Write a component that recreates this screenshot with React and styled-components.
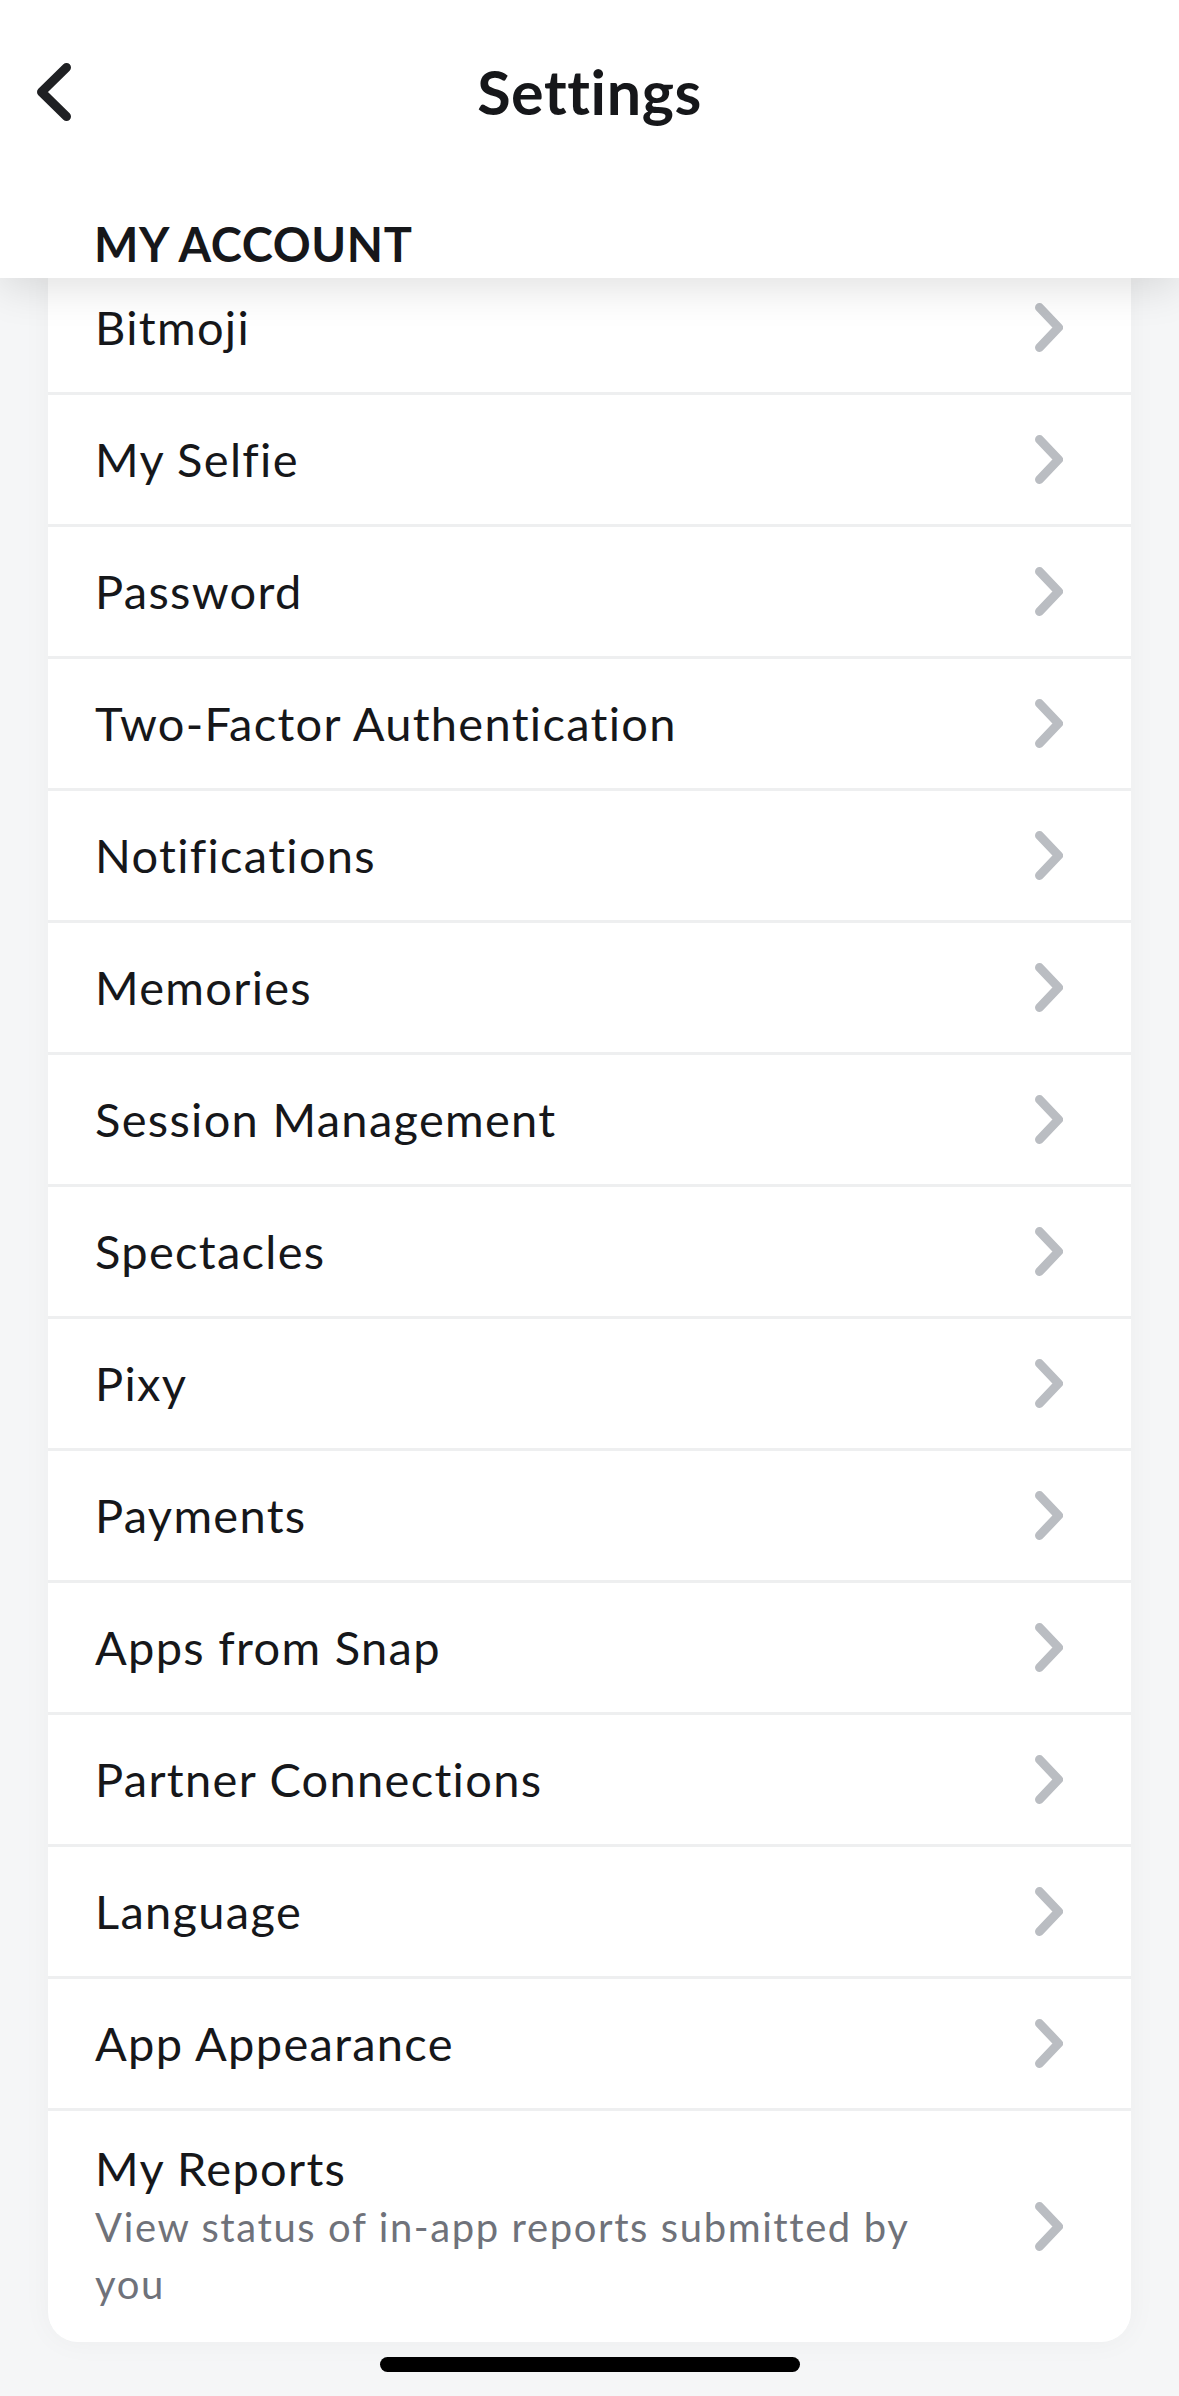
import React from 'react'
import styled, { createGlobalStyle } from 'styled-components'

const GlobalStyle = createGlobalStyle`
  html, body {
    margin: 0;
    padding: 0;
    background: #f5f6f7;
  }
  body {
    font-family: Lato, "Noto Sans", sans-serif;
    color: #16171a;
    -webkit-font-smoothing: antialiased;
  }
`

const items = [
  'Bitmoji',
  'My Selfie',
  'Password',
  'Two-Factor Authentication',
  'Notifications',
  'Memories',
  'Session Management',
  'Spectacles',
  'Pixy',
  'Payments',
  'Apps from Snap',
  'Partner Connections',
  'Language',
  'App Appearance',
]

const ChevronRight = () => (
  <Chevron viewBox="0 0 28 49" width="28" height="49">
    <polyline
      points="4.5,4.5 23.5,24.5 4.5,44.5"
      fill="none"
      stroke="#babdc2"
      strokeWidth="9"
      strokeLinecap="round"
      strokeLinejoin="round"
    />
  </Chevron>
)

const App = () => {
  return (
    <Screen>
      <GlobalStyle />
      <Header>
        <TopBar>
          <BackButton aria-label="Back">
            <svg viewBox="0 0 34 58" width="34" height="58">
              <polyline
                points="29.5,4.5 4.5,29 29.5,53.5"
                fill="none"
                stroke="#1f2023"
                strokeWidth="9"
                strokeLinecap="round"
                strokeLinejoin="round"
              />
            </svg>
          </BackButton>
          <Title>Settings</Title>
        </TopBar>
        <SectionLabel>MY ACCOUNT</SectionLabel>
      </Header>
      <Card>
        {items.map((label) => (
          <Row key={label}>
            <RowText>
              <RowTitle>{label}</RowTitle>
            </RowText>
            <ChevronRight />
          </Row>
        ))}
        <Row tall>
          <RowText>
            <RowTitle>My Reports</RowTitle>
            <RowSub>View status of in-app reports submitted by you</RowSub>
          </RowText>
          <ChevronRight />
        </Row>
      </Card>
      <HomeBar />
    </Screen>
  )
}

const Screen = styled.div`
  width: 1179px;
  height: 2396px;
  overflow: hidden;
  background: #f5f6f7;
  display: flex;
  flex-direction: column;
`
const Header = styled.header`
  position: relative;
  z-index: 2;
  height: 278px;
  box-sizing: border-box;
  padding-bottom: 10px;
  flex-shrink: 0;
  background: #ffffff;
  box-shadow: 0 10px 40px rgba(0, 0, 0, 0.12);
  display: flex;
  flex-direction: column;
`
const TopBar = styled.div`
  position: relative;
  height: 182px;
  display: flex;
  align-items: center;
  justify-content: center;
`
const BackButton = styled.button`
  position: absolute;
  left: 37px;
  top: 63px;
  padding: 0;
  border: none;
  background: transparent;
  display: flex;
  cursor: pointer;
`
const Title = styled.h1`
  margin: 0;
  font-size: 61px;
  font-weight: 700;
  line-height: 1;
  letter-spacing: 0.6px;
  color: #16171a;
`
const SectionLabel = styled.div`
  margin-top: auto;
  padding-left: 94px;
  font-size: 47px;
  font-weight: 700;
  line-height: 1;
  letter-spacing: 0.6px;
  color: #16171a;
`
const Card = styled.div`
  margin: -15px 48px 0 48px;
  background: #ffffff;
  border-radius: 0 0 30px 30px;
  box-shadow: 0 0 30px rgba(0, 0, 0, 0.04);
  display: flex;
  flex-direction: column;
  overflow: hidden;
  flex-shrink: 0;
`
const Row = styled.div`
  height: ${(p) => (p.tall ? '231px' : '132px')};
  box-sizing: border-box;
  border-bottom: 3px solid #eeeff0;
  padding-left: 47px;
  display: flex;
  align-items: center;
  &:last-child {
    border-bottom: none;
  }
`
const RowText = styled.div`
  flex: 1;
  display: flex;
  flex-direction: column;
  padding-right: 80px;
`
const RowTitle = styled.div`
  font-size: 47px;
  font-weight: 400;
  line-height: 1.2;
  letter-spacing: 1.3px;
  color: #16171a;
`
const RowSub = styled.div`
  max-width: 870px;
  margin-top: 2px;
  font-size: 40px;
  line-height: 57px;
  letter-spacing: 1.6px;
  color: #6f727a;
`
const Chevron = styled.svg`
  flex-shrink: 0;
  margin-right: 68px;
`
const HomeBar = styled.div`
  width: 420px;
  height: 15px;
  border-radius: 8px;
  background: #000000;
  margin: 15px auto 0 auto;
  flex-shrink: 0;
`

export default App
